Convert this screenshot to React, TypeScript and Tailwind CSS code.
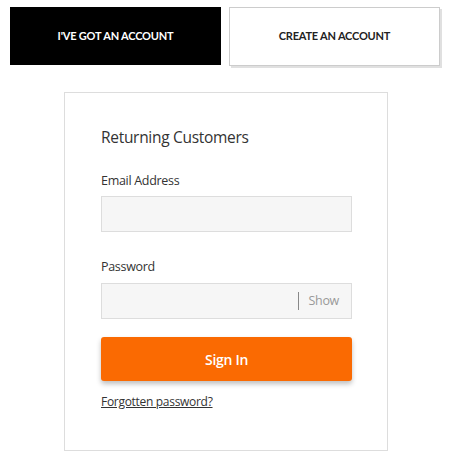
export default function App() {
  return (
    <div className="w-[452px] h-[462px] bg-white" style={{ fontFamily: "Lato, sans-serif" }}>
      <div className="flex gap-2 pl-[10px] pt-[7px]">
        <button className="w-[211px] h-[58px] bg-black text-white text-[11px] font-bold tracking-[-0.2px]">
          I'VE GOT AN ACCOUNT
        </button>
        <button className="w-[211px] h-[59px] bg-white border border-[#cccccc] shadow-[2px_2px_0_#e0e0e0] text-[#222] text-[11px] font-bold tracking-[-0.2px]">
          CREATE AN ACCOUNT
        </button>
      </div>

      <div
        className="ml-[64px] mt-[26px] w-[324px] h-[359px] border border-[#dddddd] px-[36px] pt-[33px] tracking-[-0.3px]"
        style={{ fontFamily: "'Open Sans', sans-serif" }}
      >
        <h2 className="text-[15.5px] text-[#333] leading-[22px]">Returning Customers</h2>

        <label className="block mt-[24px] text-[12.5px] text-[#333] leading-[18px]">Email Address</label>
        <input className="mt-[6px] block w-[251px] h-[36px] bg-[#f6f6f6] border border-[#dddddd] outline-none" />

        <label className="block mt-[26px] text-[12.5px] text-[#333] leading-[18px]">Password</label>
        <div className="mt-[7px] w-[251px] h-[36px] bg-[#f6f6f6] border border-[#dddddd] flex items-center">
          <input type="password" className="flex-1 min-w-0 h-full bg-transparent outline-none" />
          <div className="h-[18px] w-px bg-[#888]" />
          <span className="pl-[9px] pr-[12px] text-[12.5px] text-[#999]">Show</span>
        </div>

        <button className="mt-[18px] w-[251px] h-[44px] rounded-[3px] bg-[#fa6a02] text-white text-[14px] font-semibold shadow-[0_3px_5px_rgba(0,0,0,0.25)]">
          Sign In
        </button>

        <a href="#" className="block mt-[13px] text-[12px] text-[#333] underline leading-[16px]">
          Forgotten password?
        </a>
      </div>
    </div>
  );
}
